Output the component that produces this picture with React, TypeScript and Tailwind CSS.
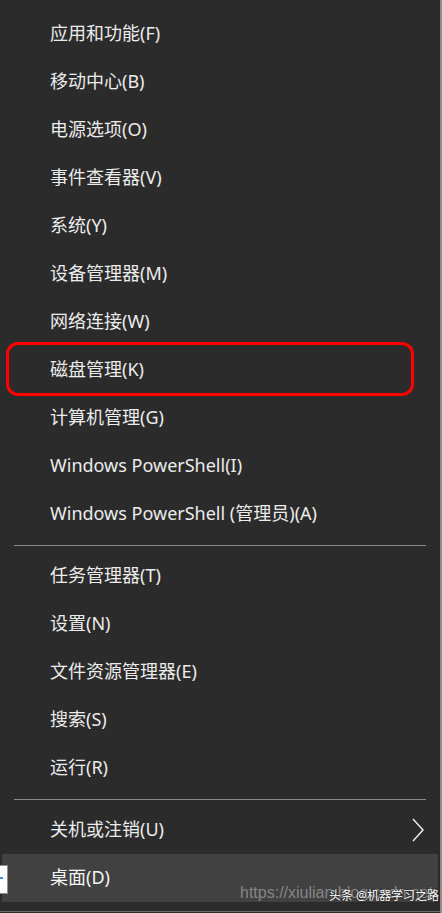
const groups: string[][] = [
  [
    '应用和功能(F)',
    '移动中心(B)',
    '电源选项(O)',
    '事件查看器(V)',
    '系统(Y)',
    '设备管理器(M)',
    '网络连接(W)',
    '磁盘管理(K)',
    '计算机管理(G)',
    'Windows PowerShell(I)',
    'Windows PowerShell (管理员)(A)',
  ],
  ['任务管理器(T)', '设置(N)', '文件资源管理器(E)', '搜索(S)', '运行(R)'],
]

const font = "font-['Noto_Sans','Noto_Sans_CJK_SC',sans-serif]"

function Item({ label, marked }: { label: string; marked?: boolean }) {
  return (
    <div className="relative flex h-12 items-center pb-[1px] pl-[50px] text-[18px] text-[#ececec]">
      {marked && (
        <div className="pointer-events-none absolute top-[-4px] bottom-[-2px] left-[6px] w-[408px] rounded-[12px] border-[3px] border-[#ff0000]" />
      )}
      {label}
    </div>
  )
}

function Separator() {
  return (
    <div className="flex h-[14px] items-center px-[14px]">
      <div className="h-px w-full bg-[#8a8a8a]" />
    </div>
  )
}

function App() {
  return (
    <div className={`relative flex h-[913px] w-[442px] overflow-hidden bg-[#2b2b2b] ${font}`}>
      <div className="flex w-[440px] flex-col pt-[10px]">
        {groups[0].map((label) => (
          <Item key={label} label={label} marked={label === '磁盘管理(K)'} />
        ))}
        <Separator />
        {groups[1].map((label) => (
          <Item key={label} label={label} />
        ))}
        <Separator />
        <div className="flex h-12 items-center justify-between pr-[16px] pb-[1px] pl-[50px] text-[18px] text-[#ececec]">
          <span>关机或注销(U)</span>
          <svg width="12" height="24" viewBox="0 0 12 24" fill="none">
            <path d="M1 1 L11 12 L1 23" stroke="#f2f2f2" strokeWidth="1.4" />
          </svg>
        </div>
        <div className="relative mx-[2px] flex h-12 items-center bg-[#414141] pb-[1px] pl-[48px] text-[18px] text-[#f5f5f5]">
          桌面(D)
          <div className="absolute top-[11px] left-[-2px] h-[29px] w-[8px] border border-l-0 border-[#8f8f8f] bg-white">
            <div className="mt-[11px] h-[2px] w-[3px] bg-[#3b8ee8]" />
          </div>
          {/* watermark: url sits under the caption, as in the screenshot */}
          <div className="absolute top-[31px] left-[238px] whitespace-nowrap font-['Liberation_Sans',sans-serif] text-[16px] leading-none text-[#9a9a9a]/80">
            https://xiulian.blog.csdn.net
          </div>
          <div className="absolute top-[36px] left-[327px] whitespace-nowrap text-[12px] leading-none text-white [text-shadow:0_0_2px_#000]">
            头条 @机器学习之路
          </div>
        </div>
      </div>
      <div className="w-[2px] bg-[#8c8c8c]" />
      <div className="absolute bottom-[1px] left-0 h-px w-[440px] bg-[#6a6a6a]" />
    </div>
  )
}

export default App
